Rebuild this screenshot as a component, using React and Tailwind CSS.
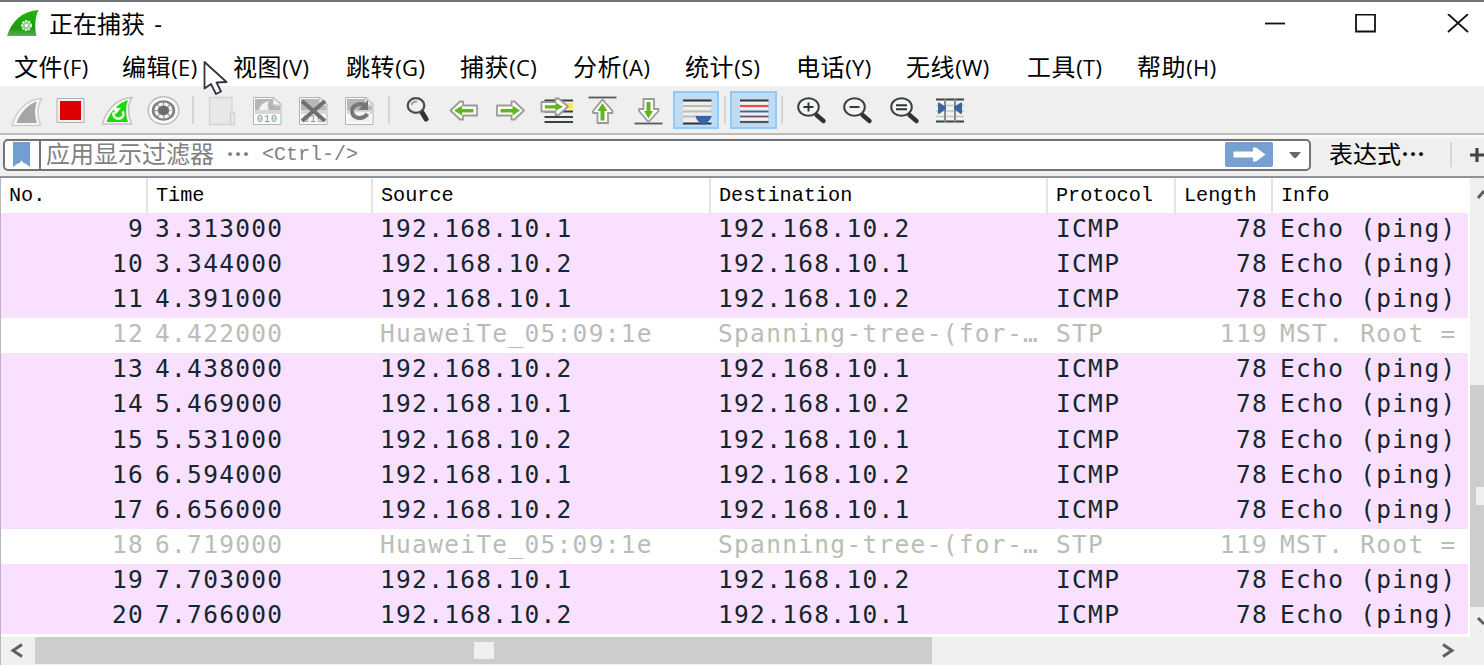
const MENUS = [
  { label: "文件(F)", width: "w-[108px]" },
  { label: "编辑(E)", width: "w-[111px]" },
  { label: "视图(V)", width: "w-[113px]" },
  { label: "跳转(G)", width: "w-[114px]" },
  { label: "捕获(C)", width: "w-[113px]" },
  { label: "分析(A)", width: "w-[112px]" },
  { label: "统计(S)", width: "w-[111px]" },
  { label: "电话(Y)", width: "w-[110px]" },
  { label: "无线(W)", width: "w-[121px]" },
  { label: "工具(T)", width: "w-[110px]" },
  { label: "帮助(H)", width: "w-[110px]" },
];

const COLUMNS = [
  { label: "No.", width: "w-[147px]" },
  { label: "Time", width: "w-[225px]" },
  { label: "Source", width: "w-[338px]" },
  { label: "Destination", width: "w-[337px]" },
  { label: "Protocol", width: "w-[128px]" },
  { label: "Length", width: "w-[97px]" },
  { label: "Info", width: "w-[197px]" },
];

const ping = (no, time, from, to) => ({
  no,
  time,
  source: `192.168.10.${from}`,
  destination: `192.168.10.${to}`,
  protocol: "ICMP",
  length: 78,
  info: "Echo (ping)",
});

const stp = (no, time) => ({
  no,
  time,
  source: "HuaweiTe_05:09:1e",
  destination: "Spanning-tree-(for-…",
  protocol: "STP",
  length: 119,
  info: "MST. Root =",
});

const PACKETS = [
  ping(9, "3.313000", 1, 2),
  ping(10, "3.344000", 2, 1),
  ping(11, "4.391000", 1, 2),
  stp(12, "4.422000"),
  ping(13, "4.438000", 2, 1),
  ping(14, "5.469000", 1, 2),
  ping(15, "5.531000", 2, 1),
  ping(16, "6.594000", 1, 2),
  ping(17, "6.656000", 2, 1),
  stp(18, "6.719000"),
  ping(19, "7.703000", 1, 2),
  ping(20, "7.766000", 2, 1),
];

function ToolButton({ active, children }) {
  return (
    <button className={`h-[38px] w-[46.25px] shrink-0 ${active ? "bg-[#c0dcf3] outline-2 -outline-offset-2 outline-[#91c9f7]" : ""}`}>
      <svg viewBox="0 0 46 38" className="block h-[38px] w-[46px]" fill="none">
        {children}
      </svg>
    </button>
  );
}

function Separator() {
  return (
    <div className="flex w-[11.5px] shrink-0 justify-center">
      <div className="h-7 w-[2px] bg-[#d5d5d5]" />
    </div>
  );
}

function FileIcon({ children }) {
  return (
    <>
      <path d="M8.5 6.5H29L36 13V33.5H8.5Z" fill="#fafafa" stroke="#b4b4b4" />
      <path d="M10 8H28V14L35 15V19H10Z" fill="#b6b6b6" />
      <path d="M10 19H35V23H10Z" fill="#d6d6d6" />
      <path d="M28 7V14H36Z" fill="#f4f4f4" stroke="#bbb" strokeWidth=".8" />
      <text x="22" y="31" textAnchor="middle" fontSize="10" fill="#8c8c8c" fontFamily="Liberation Mono, monospace" textLength="20">010</text>
      {children}
    </>
  );
}

function ZoomIcon({ children }) {
  return (
    <>
      <path d="M28.5 24L35.5 30" stroke="#2e3436" strokeWidth="4.4" strokeLinecap="round" />
      <ellipse cx="20.500" cy="16" rx="10.300" ry="8.800" fill="#f4f4f4" stroke="#3a3f41" strokeWidth="2" />
      <g stroke="#2e3436" strokeWidth="1.900">{children}</g>
    </>
  );
}

const arrowOuter = { fill: "#fff", stroke: "#9a9a96", strokeWidth: 1.8, strokeLinejoin: "round" };

function Toolbar() {
  return (
    <div className="flex h-[45px] items-center bg-[#efefef] pl-[2px]">
      <ToolButton>
        <path d="M10 34.5C14 20 25 8 39.5 7.5C35 15 35 25 38.5 34.5Z" fill="#f8f8f8" stroke="#cdcdcd" strokeWidth="1.5" />
        <path d="M14.5 32C18 22 26 13 35 10.5C32.500 17 32.500 25 35 32Z" fill="#a6a6a6" />
      </ToolButton>
      <ToolButton>
        <path d="M9 7.500H36V31.500H9Z" fill="#f2f2f2" stroke="#b0b0b0" />
        <path d="M12 10H33V29H12Z" fill="#dc0000" />
      </ToolButton>
      <ToolButton>
        <path d="M7.500 33C11 19 22 7 37 6.500C32.500 13 32.500 24 36.500 33Z" fill="#fafafa" stroke="#c2c2c2" strokeWidth="1.500" />
        <path d="M11.500 31C15 21 23 12 33 9C30.500 15 30.500 24 33 31Z" fill="#1fd80c" />
        <path d="M19 21A5 4.500 0 1 0 27.500 20.500" stroke="#fff" strokeWidth="2.400" />
        <path d="M18.500 16.500L26 17L20.500 23.500Z" fill="#fff" />
      </ToolButton>
      <ToolButton>
        <ellipse cx="22.500" cy="19.500" rx="15.300" ry="13.700" fill="#fafafa" stroke="#bdbdbd" strokeWidth="1.500" />
        <ellipse cx="22.500" cy="19.500" rx="11.700" ry="10.300" fill="#808080" />
        <ellipse cx="22.500" cy="19.500" rx="7.500" ry="6.500" stroke="#f4f4f4" strokeWidth="3.200" strokeDasharray="4.500 1" />
        <ellipse cx="22.500" cy="19.500" rx="5" ry="4.500" fill="#6c6c6c" />
      </ToolButton>
      <Separator />
      <ToolButton>
        <path d="M10.500 6.500H33V21.500H35.500V33.500H10.500Z" fill="#e8e8e8" stroke="#d4d4d4" strokeWidth="1.300" />
        <path d="M31.500 33V21.500H35" stroke="#d0d0d0" strokeWidth="1.300" />
      </ToolButton>
      <ToolButton>
        <FileIcon>
          <path d="M14 19C15 14 19 11 24 10C22 13 23 17 24 19Z" fill="#f2f2f2" />
        </FileIcon>
      </ToolButton>
      <ToolButton>
        <FileIcon>
          <path d="M11 10L34 30M34 10L11 30" stroke="#6f6f6f" strokeWidth="4" />
        </FileIcon>
      </ToolButton>
      <ToolButton>
        <FileIcon>
          <path d="M12 21H33V31H12Z" fill="#f2f2f2" />
          <path d="M29 15C24 11 15 14 15 20C15 27 25 30 30.500 23" stroke="#777" strokeWidth="4" />
          <path d="M31 9V19H21Z" fill="#777" />
        </FileIcon>
      </ToolButton>
      <Separator />
      <ToolButton>
        <path d="M26.500 20.500L31 28" stroke="#2e3436" strokeWidth="5" strokeLinecap="round" />
        <ellipse cx="21" cy="14.500" rx="8.300" ry="7.300" fill="#efefef" stroke="#4a4f51" strokeWidth="2.300" />
        <path d="M16.500 14C17 11.500 19 10.500 22 10.500" stroke="#8a8a8a" strokeWidth="1.500" />
      </ToolButton>
      <ToolButton>
        <path d="M9.500 19.500L19 10.500H22V14.500H36V24.500H22V28.500H19Z" {...arrowOuter} />
        <path d="M13 19.500L21 14.500V18H32.500V21.500H21V24.500Z" fill="#62b51c" />
      </ToolButton>
      <ToolButton>
        <path d="M36 19.500L26.500 10.500H23.500V14.500H9V24.500H23.500V28.500H26.500Z" {...arrowOuter} />
        <path d="M32 19.500L24.500 14.500V18H12.500V21.500H24.500V24.500Z" fill="#62b51c" />
      </ToolButton>
      <ToolButton>
        <path d="M10.500 9.500H39M10.500 20.500H39M10.500 26H39M10.500 31H39" stroke="#3c4143" strokeWidth="2" />
        <path d="M31 12H39V18H31Z" fill="#fce94f" />
        <path d="M34 15.500L24.500 7.500H21.500V11H7.500V20.500H21.500V24H24.500Z" {...arrowOuter} />
        <path d="M29 15.700L21.500 11.500V14.200H11V17.500H21.500V20Z" fill="#62b51c" />
      </ToolButton>
      <ToolButton>
        <path d="M8.500 6.500H36.500" stroke="#555a5c" strokeWidth="1.800" />
        <path d="M22.500 8.500L32.500 20V22H28V32H17.500V22H13V20Z" {...arrowOuter} />
        <path d="M22.500 12L27.500 20H24.500V29.500H20.500V20H17.500Z" fill="#62b51c" />
      </ToolButton>
      <ToolButton>
        <path d="M8.500 32.500H36.500" stroke="#555a5c" strokeWidth="1.800" />
        <path d="M22.500 31L32.500 20V18H28V8H17.500V18H13V20Z" {...arrowOuter} />
        <path d="M22.500 27.500L27 20H24.500V11H20.500V20H18Z" fill="#62b51c" />
      </ToolButton>
      <ToolButton active>
        <path d="M10 9H38V33H10Z" fill="#eeeeec" />
        <path d="M10 9.500H38.500M10 32.500H38.500" stroke="#2e3436" strokeWidth="2" />
        <path d="M10 15H38.500M10 20.500H38.500M10 25.500H38.500" stroke="#babdb6" strokeWidth="1.800" />
        <path d="M22.500 25H38.500C38 29 35 30.500 32.500 33.500H28.500C26 30.500 23 29 22.500 25Z" fill="#3465a4" />
      </ToolButton>
      <Separator />
      <ToolButton active>
        <path d="M10 9H38V32H10Z" fill="#f2f2f0" />
        <path d="M10 9.500H38.500" stroke="#2e3436" strokeWidth="2" />
        <path d="M10 15H38.500" stroke="#ef4a4a" strokeWidth="2.200" />
        <path d="M10 20.500H38.500" stroke="#3465a4" strokeWidth="1.900" />
        <path d="M10 25.500H38.500" stroke="#75507b" strokeWidth="1.900" />
        <path d="M10 31H38.500" stroke="#555753" strokeWidth="2.200" />
      </ToolButton>
      <Separator />
      <ToolButton>
        <ZoomIcon>
          <path d="M15.500 16H25.500M20.500 11.500V20.500" />
        </ZoomIcon>
      </ToolButton>
      <ToolButton>
        <ZoomIcon>
          <path d="M15.500 16H25.500" />
        </ZoomIcon>
      </ToolButton>
      <ToolButton>
        <ZoomIcon>
          <path d="M15 14.200H26M15 18.200H26" />
        </ZoomIcon>
      </ToolButton>
      <ToolButton>
        <path d="M9 8H37V31H9Z" fill="#f2f2f0" />
        <path d="M9 14.500H37M9 20H37M9 25.500H37" stroke="#c4c6c0" strokeWidth="1.500" />
        <path d="M9 8.500H37M9 30.500H37" stroke="#3c4143" strokeWidth="2" />
        <path d="M18 8V31M28 8V31" stroke="#888a85" strokeWidth="2" />
        <path d="M11 11.500C14 11.500 15 14.500 19 15.500V18.500C15 19.500 14 23 11 23ZM35 11.500C32 11.500 31 14.500 27 15.500V18.500C31 19.500 32 23 35 23Z" fill="#3465a4" />
      </ToolButton>
    </div>
  );
}

function FilterBar() {
  return (
    <div className="flex h-[38px] items-start bg-[#efefef] pl-[3px] pt-px">
      <div className="flex h-8 w-[1308px] shrink-0 items-center rounded-[5px] border-2 border-[#747474] bg-white">
        <div className="flex h-full w-[36px] shrink-0 items-center justify-center border-r-2 border-[#747474]">
          <svg viewBox="0 0 17 25" className="mr-[1px] h-[25px] w-[17px]">
            <path d="M0 0H17V25L12.500 21.500H11L8.500 18.500L6 21.500H4.500L0 25Z" fill="#729fcf" />
          </svg>
        </div>
        <div className="flex grow items-center whitespace-pre pb-[3px] pl-[5px] text-[#808080]">
          <span className="font-['Noto_Sans_CJK_SC',sans-serif] text-2xl leading-7">应用显示过滤器</span>
          <span className="ml-3 font-['Noto_Sans_CJK_SC',sans-serif] text-2xl font-bold leading-7">…</span>
          <span className="ml-3 mt-[3px] font-['Liberation_Mono',monospace] text-xl leading-7">{"<Ctrl-/>"}</span>
        </div>
        <svg viewBox="0 0 48 25" className="h-[25px] w-12 shrink-0">
          <rect width="48" height="25" rx="2" fill="#779fcf" />
          <path d="M8.500 9.500H28V5.500H31L40.500 12.500L31 19.500H28V15.500H8.500Z" fill="#fff" />
        </svg>
        <svg viewBox="0 0 14 8" className="ml-[15px] mr-[7px] h-[8px] w-[14px] shrink-0">
          <path d="M1 1H13L8 7H6Z" fill="#686868" />
        </svg>
      </div>
      <span className="ml-[18px] h-8 w-[97px] shrink-0 whitespace-nowrap font-['Noto_Sans_CJK_SC',sans-serif] text-2xl leading-[28px] text-black">
        表达式<span className="font-bold">…</span>
      </span>
      <div className="ml-[24px] mt-[3px] h-[25px] w-[2px] shrink-0 bg-[#d6d6d6]" />
      <svg viewBox="0 0 16 16" className="ml-[17px] mt-[8px] h-4 w-4 shrink-0">
        <path d="M1 8H15M8 1V15" stroke="#444" strokeWidth="3.200" />
      </svg>
    </div>
  );
}

function PacketRow({ packet }) {
  const tone = packet.protocol === "ICMP" ? "bg-[#fae0ff] text-[#12272e]" : "bg-white text-[#babdb6]";
  return (
    <div className={`flex h-[35.125px] items-start whitespace-pre leading-[32px] ${tone}`}>
      <span className="w-[143px] shrink-0 text-right">{packet.no}</span>
      <span className="w-[225px] shrink-0 pl-[11px]">{packet.time}</span>
      <span className="w-[338px] shrink-0 pl-[11px]">{packet.source}</span>
      <span className="w-[338px] shrink-0 pl-[11px]">{packet.destination}</span>
      <span className="w-[110px] shrink-0 pl-[11px]">{packet.protocol}</span>
      <span className="w-[113px] shrink-0 text-right">{packet.length}</span>
      <span className="shrink-0 pl-[12px]">{packet.info}</span>
    </div>
  );
}

function PacketList() {
  return (
    <div className="flex h-[460px] border-l border-[#b9b4bd] bg-white">
      <div className="w-[1469px] shrink-0">
        <div className="flex h-[35px] font-['Liberation_Mono',monospace] text-[20.2px] leading-[36px] text-black">
          {COLUMNS.map((col) => (
            <div key={col.label} className={`shrink-0 border-r-2 border-[#e4e4e4] pl-[8px] last:border-r-0 ${col.width}`}>
              {col.label}
            </div>
          ))}
        </div>
        <div className="w-[1467px] overflow-hidden font-['DejaVu_Sans_Mono',monospace] text-[24.5px] tracking-[1.3px]">
          {PACKETS.map((packet) => (
            <PacketRow key={packet.no} packet={packet} />
          ))}
        </div>
      </div>
      <div className="flex w-[14px] shrink-0 flex-col items-end bg-[#f0f0f0]">
        <svg viewBox="0 0 14 207" className="h-[207px] w-[14px]">
          <path d="M8 20L14 13" stroke="#606060" strokeWidth="3" />
        </svg>
        <div className="flex h-[222px] w-full items-center justify-end bg-[#cdcdcd]">
          <div className="h-[18px] w-2 bg-[#f0f0f0]" />
        </div>
        <svg viewBox="0 0 14 30" className="h-[30px] w-[14px]">
          <path d="M8 11L14 17" stroke="#606060" strokeWidth="3" />
        </svg>
      </div>
    </div>
  );
}

export default function App() {
  return (
    <div className="relative flex h-[665px] w-[1484px] flex-col overflow-hidden bg-white">
      <div className="h-[2px] shrink-0 bg-[#6d7178]" />

      <div className="flex h-[44px] shrink-0 items-center pl-[6px]">
        <svg viewBox="0 0 34 28" className="h-7 w-[34px]">
          <defs>
            <linearGradient id="fin" x1="0" y1="0" x2="0" y2="1">
              <stop offset="0" stopColor="#25b50c" />
              <stop offset=".7" stopColor="#1a9c10" />
              <stop offset="1" stopColor="#63a85c" />
            </linearGradient>
          </defs>
          <path d="M1 26C6 11 16 1 32.500 0C29 7 28.500 17 30.500 26Z" fill="url(#fin)" />
          <circle cx="20.500" cy="15.500" r="4.500" fill="#8fce86" stroke="#dff2dc" strokeWidth="2" strokeDasharray="2 1.200" />
          <circle cx="20.500" cy="15.500" r="1.800" fill="#e6f5e4" />
        </svg>
        <span className="ml-[9px] whitespace-pre font-['Open_Sans','Noto_Sans_CJK_SC',sans-serif] text-2xl leading-9 text-black">
          正在捕获<span className="ml-[3px]"> -</span>
        </span>
        <div className="ml-auto flex h-full items-center pr-[15px]">
          <svg viewBox="0 0 204 20" className="h-5 w-[204px]" fill="none" stroke="#111">
            <path d="M0 9.500H20" strokeWidth="1.800" />
            <path d="M91 0.500H110V17.500H91Z" strokeWidth="1.800" />
            <path d="M183 0L203 18M203 0L183 18" strokeWidth="1.800" />
          </svg>
        </div>
      </div>

      <div className="flex h-[40px] shrink-0 pl-[14px] font-['Open_Sans','Noto_Sans_CJK_SC',sans-serif] text-[24px] leading-[42px] text-black">
        {MENUS.map((menu) => (
          <span key={menu.label} className={`shrink-0 whitespace-nowrap ${menu.width}`}>
            <span className="tracking-[0.6px]">{menu.label.slice(0, 2)}</span>
            <span className="text-[22px] tracking-[0.4px]">{menu.label.slice(2)}</span>
          </span>
        ))}
      </div>
      <div className="h-[2px] shrink-0 bg-[#f2f2f2]" />

      <Toolbar />
      <div className="h-[2px] shrink-0 bg-[#bcbcbc]" />
      <div className="h-[3px] shrink-0 bg-[#f8f8f8]" />
      <FilterBar />
      <div className="h-[2px] shrink-0 bg-[#8e939c]" />

      <PacketList />

      <div className="flex h-7 shrink-0 items-start border-l border-[#b9b4bd] bg-[#f0f0f0]">
        <svg viewBox="0 0 34 28" className="h-7 w-[34px] shrink-0" fill="none">
          <path d="M21 7.500L12 13.500L21 19.500" stroke="#606060" strokeWidth="3" />
        </svg>
        <div className="flex h-[27px] w-[897px] items-center justify-center bg-[#cdcdcd]">
          <div className="h-[17px] w-5 bg-[#f0f0f0]" />
        </div>
        <svg viewBox="0 0 20 28" className="ml-auto mr-[22px] h-7 w-5 shrink-0" fill="none">
          <path d="M1 7.500L10 13.500L1 19.500" stroke="#606060" strokeWidth="3" />
        </svg>
      </div>

      {/* mouse pointer */}
      <svg viewBox="0 0 26 36" className="absolute left-[203px] top-[60px] h-9 w-[26px]">
        <path d="M1.500 2V28.500L8 24L13 34L18 31.500L13.500 22.500L23.500 22Z" fill="#fff" stroke="#33343f" strokeWidth="1.800" strokeLinejoin="round" />
      </svg>
    </div>
  );
}
